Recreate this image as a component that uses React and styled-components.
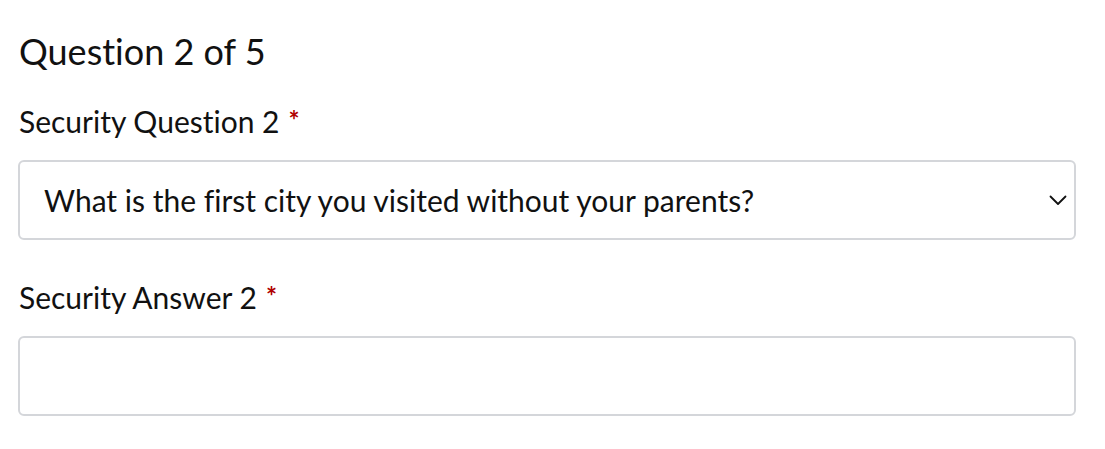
import React from "react";
import styled, { createGlobalStyle } from "styled-components";

const GlobalStyle = createGlobalStyle`
  body {
    margin: 0;
    background: #ffffff;
    font-family: "Source Sans Pro", Lato, "Liberation Sans", sans-serif;
    font-variant-ligatures: none;
    color: #111111;
  }
`;

const Page = styled.div`
  padding: 27px 29px 0 18px;
`;

const Heading = styled.h2`
  margin: 0 0 0 1px;
  font-size: 36px;
  font-weight: 400;
  line-height: 48px;
  color: #111;
`;

const Field = styled.div`
  display: flex;
  flex-direction: column;
  margin-top: ${(p) => p.top}px;
`;

const Label = styled.label`
  margin: 0 0 0 1px;
  font-size: 30px;
  line-height: 36px;
  color: #111;
`;

const Required = styled.span`
  color: #b00000;
  margin-left: 9px;
  font-size: 26px;
  font-weight: 700;
  vertical-align: 3px;
`;

const Control = styled.div`
  position: relative;
  margin-top: ${(p) => p.top}px;
`;

const Select = styled.select`
  appearance: none;
  width: 100%;
  height: 80px;
  box-sizing: border-box;
  border: 2px solid #d4d6da;
  border-radius: 6px;
  background: #fff;
  padding: 0 60px 0 24px;
  font-family: inherit;
  font-variant-ligatures: none;
  font-size: 30px;
  color: #111;
  outline: none;
`;

const Chevron = styled.svg`
  position: absolute;
  right: 9px;
  top: 35px;
  pointer-events: none;
`;

const Input = styled.input`
  width: 100%;
  height: 80px;
  box-sizing: border-box;
  border: 2px solid #d4d6da;
  border-radius: 6px;
  background: #fff;
  padding: 0 24px;
  font-family: inherit;
  font-size: 30px;
  outline: none;
`;

export default function App() {
  return (
    <>
      <GlobalStyle />
      <Page>
        <Heading>Question 2 of 5</Heading>
        <Field top={27}>
          <Label>
            Security Question 2<Required>*</Required>
          </Label>
          <Control top={21}>
            <Select defaultValue="city">
              <option value="city">What is the first city you visited without your parents?</option>
            </Select>
            <Chevron width="18" height="11" viewBox="0 0 18 11" fill="none">
              <path d="M1.5 1.5 L9 9 L16.5 1.5" stroke="#111" strokeWidth="1.8" strokeLinecap="round" strokeLinejoin="round" />
            </Chevron>
          </Control>
        </Field>
        <Field top={38}>
          <Label>
            Security Answer 2<Required>*</Required>
          </Label>
          <Control top={21}>
            <Input type="text" />
          </Control>
        </Field>
      </Page>
    </>
  );
}
